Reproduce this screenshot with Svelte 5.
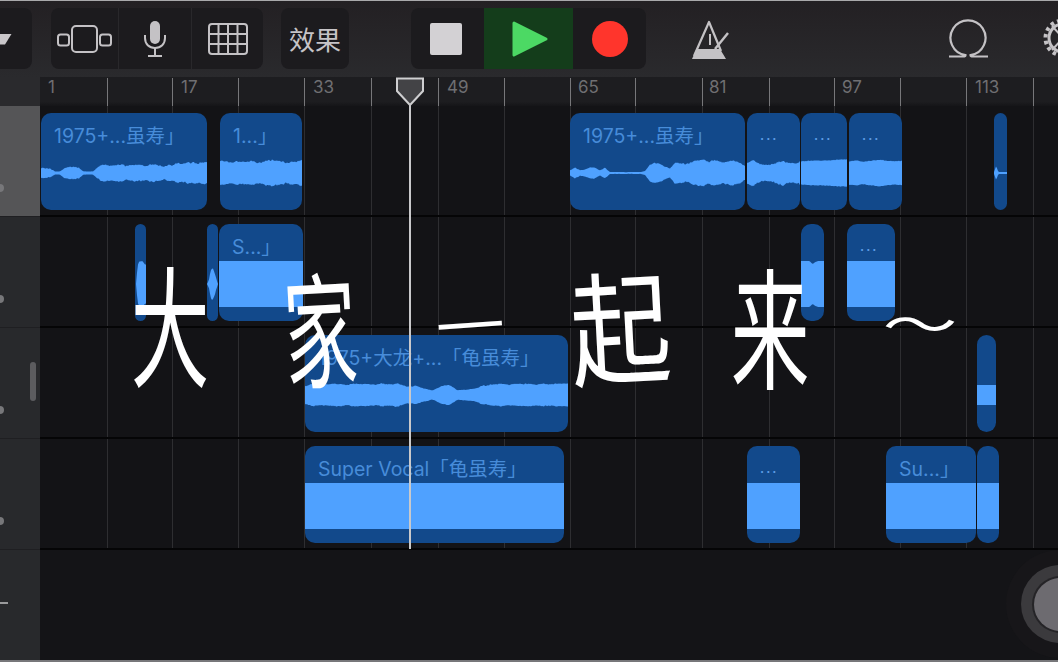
<script>
    // bar lines on the timeline, same x in the ruler and in the tracks
    const bars = [107, 172, 238, 304, 371, 438, 504, 570, 635, 702, 769, 834, 900, 966, 1033];
    const rulerLabels = [
        { n: '1', x: 48 }, { n: '17', x: 181 }, { n: '33', x: 313 }, { n: '49', x: 447 },
        { n: '65', x: 578 }, { n: '81', x: 709 }, { n: '97', x: 842 }, { n: '113', x: 975 }
    ];

    const FLAT = [23];

    const rows = [
        [
            { from: 41, to: 207, label: '1975+...虽寿」', jitter: 0.3,
              env: [6, 6, 5, 1.5, 2, 6, 7, 7, 6, 2, 1.5, 2, 7, 9, 9, 8, 9, 10, 9, 9, 10, 9, 8, 10, 10, 9, 7, 9, 10, 11, 10, 12, 13, 12, 13, 13] },
            { from: 220, to: 302, label: '1...」', env: [13, 13, 12, 13, 13, 12, 13, 14, 13, 12, 13, 14], jitter: 0.22 },
            { from: 570, to: 745, label: '1975+...虽寿」', jitter: 0.22,
              env: [3, 6, 3, 4, 6, 6, 3, 6, 1, 1, 1, 1, 1, 1, 1, 2, 9, 11, 10, 7, 5, 12, 11, 10, 11, 13, 14, 14, 12, 14, 13, 12, 14, 13, 12, 8] },
            { from: 747, to: 800, label: '...', small: true, env: [12, 14, 11, 9, 10, 11, 14, 11, 12, 13], jitter: 0.25 },
            { from: 801, to: 847, label: '...', small: true, env: [12, 13, 13, 13, 14, 14], jitter: 0.08 },
            { from: 849, to: 902, label: '...', small: true, env: [12, 13, 12, 13, 14, 13, 12, 13], jitter: 0.1 },
            { from: 994, to: 1007, env: [1, 7, 1, 1, 1, 1, 1], jitter: 0 }
        ],
        [
            { from: 135, to: 146, env: [0, 0, 18, 22, 23, 23, 23, 22, 20, 20], jitter: 0.04 },
            { from: 207, to: 218, env: [0, 4, 14, 17, 13, 6, 0], jitter: 0.15 },
            { from: 219, to: 303, label: 'S...」', env: FLAT },
            { from: 801, to: 824, env: [23, 23, 23, 23, 20, 22, 23, 23, 23], jitter: 0 },
            { from: 847, to: 895, label: '...', small: true, env: FLAT }
        ],
        [
            { from: 305, to: 568, label: '1975+大龙+...「龟虽寿」', jitter: 0.14,
              env: [10, 12, 11, 12, 12, 11, 12, 12, 11, 12, 12, 12, 9, 10, 7, 5, 9, 11, 5, 6, 7, 10, 11, 12, 11, 12, 12, 11, 12, 12, 12, 12] },
            { from: 977, to: 996, env: [10] }
        ],
        [
            { from: 305, to: 564, label: 'Super Vocal「龟虽寿」', env: FLAT },
            { from: 747, to: 800, label: '...', small: true, env: FLAT },
            { from: 886, to: 976, label: 'Su...」', env: FLAT },
            { from: 977, to: 999, env: FLAT }
        ]
    ];

    // sx/sy stretch the glyph towards the tall handwriting, dy and rot nudge it
    const caption = [
        { c: '大', sx: 0.82, sy: 1.36, dy: 0, rot: 0 },
        { c: '家', sx: 0.76, sy: 1.3, dy: 4, rot: -3 },
        { c: '一', sx: 0.72, sy: 0.6, dy: 2, rot: -4 },
        { c: '起', sx: 1.05, sy: 1.28, dy: 2, rot: -3 },
        { c: '来', sx: 0.82, sy: 1.36, dy: 2, rot: 0 },
        { c: '～', sx: 0.78, sy: 0.5, dy: 0, rot: 0 }
    ];

    function noise(i) {
        const s = Math.sin(i * 12.9898 + 4.1) * 43758.5453;
        return s - Math.floor(s);
    }

    // builds the filled waveform of a region, centred 60px below its top edge
    function wavePath(clip) {
        const w = clip.to - clip.from;
        const env = clip.env;
        const jitter = clip.jitter || 0;
        const top = [], bottom = [];
        for (let x = 0; x <= w; x++) {
            const t = (x / w) * (env.length - 1);
            const i = Math.floor(t);
            const next = env[Math.min(i + 1, env.length - 1)];
            const amp = env[i] + (next - env[i]) * (t - i);
            const slow = noise(Math.floor((x + clip.from) / 5));
            const a = amp * (1 - jitter * (0.5 * slow + 0.5 * noise(x + clip.from)));
            const b = amp * (1 - jitter * (0.5 * slow + 0.5 * noise(x + clip.from + 500)));
            top.push(`${x},${(60 - a).toFixed(1)}`);
            bottom.unshift(`${x},${(60 + b).toFixed(1)}`);
        }
        return 'M' + top.join(' L') + ' L' + bottom.join(' L') + ' Z';
    }
</script>

<div class="screen">
    <header class="toolbar">
        <div class="btn view-menu">
            <svg width="12" height="12" viewBox="0 0 12 12"><path d="M0 1 H11.5 L5 11.5 H0 Z" fill="#c9c7ca"/></svg>
        </div>

        <div class="btn group">
            <div class="cell tracks-cell">
                <svg width="56" height="30" viewBox="0 0 56 30" fill="none" stroke="#c4c2c5" stroke-width="2">
                    <rect x="1" y="10.5" width="11" height="11" rx="2.5"/>
                    <rect x="15" y="2" width="25" height="26" rx="4"/>
                    <rect x="43" y="10.5" width="11" height="11" rx="2.5"/>
                </svg>
            </div>
            <div class="cell mic-cell">
                <svg width="24" height="38" viewBox="0 0 24 38" fill="none" stroke="#c4c2c5" stroke-width="2">
                    <rect x="7" y="1" width="10" height="23" rx="5" fill="#c4c2c5" stroke="none"/>
                    <path d="M2 15 V18 C2 24 6 28 12 28 C18 28 22 24 22 18 V15"/>
                    <path d="M12 28 V35 M5 36 H19"/>
                </svg>
            </div>
            <div class="cell grid-cell">
                <svg width="40" height="32" viewBox="0 0 40 32" fill="none" stroke="#c4c2c5" stroke-width="2">
                    <rect x="1" y="1" width="38" height="30" rx="3"/>
                    <path d="M1 11 H39 M1 21 H39 M10.5 1 V31 M20 1 V31 M29.5 1 V31"/>
                </svg>
            </div>
        </div>

        <div class="btn fx">效果</div>

        <div class="btn transport">
            <div class="cell stop-cell"><span class="stop"></span></div>
            <div class="cell play-cell">
                <svg width="38" height="38" viewBox="0 0 38 38"><path d="M3 3 L35 19 L3 35 Z" fill="#4cd964" stroke="#4cd964" stroke-width="3" stroke-linejoin="round"/></svg>
            </div>
            <div class="cell rec-cell"><span class="rec"></span></div>
        </div>

        <svg class="metronome" width="38" height="42" viewBox="0 0 38 42" fill="none" stroke="#c4c2c5">
            <path d="M1 40 L5.5 30 L29 30 L35 40 Z" fill="#c4c2c5" stroke="none"/>
            <path d="M3 37 L18 3 L30 32" stroke-width="2.2" stroke-linejoin="round"/>
            <path d="M19 15 V26" stroke-width="2"/>
            <path d="M24 30 L37 14" stroke-width="2.4"/>
        </svg>

        <svg class="loop" width="42" height="42" viewBox="0 0 42 42" fill="none" stroke="#c4c2c5" stroke-width="2.2">
            <path d="M1 39.5 H15 Q17.5 39.5 17.5 38.2 A17.5 17.5 0 1 1 22.5 38.2 Q22.5 39.5 25 39.5 H40"/>
        </svg>

        <svg class="gear" width="18" height="42" viewBox="0 0 18 42" fill="none" stroke="#c4c2c5">
            <circle cx="20" cy="21" r="14" stroke-width="3"/>
            <circle cx="20" cy="21" r="17.5" stroke-width="4" stroke-dasharray="3.5 3.4"/>
            <path d="M20 21 L9 9 M20 21 L9 33" stroke-width="2"/>
        </svg>
    </header>

    <div class="ruler">
        <div class="ruler-corner"></div>
        <div class="ruler-bar">
            {#each bars as x}
                <span class="tick" style="left: {x - 40}px"></span>
            {/each}
            {#each rulerLabels as l}
                <span class="bar-no" style="left: {l.x - 40}px">{l.n}</span>
            {/each}
        </div>
    </div>

    <div class="body">
        <aside class="sidebar">
            {#each rows as _, i}
                <div class="head" class:selected={i === 0}><span class="dot"></span></div>
            {/each}
            <div class="head-end"><span class="add"></span></div>
            <span class="scroll-thumb"></span>
        </aside>

        <main class="timeline">
            <div class="tracks">
                {#each bars as x}
                    <span class="grid-line" style="left: {x - 40}px"></span>
                {/each}
                {#each rows as row}
                    <div class="track">
                        {#each row as clip}
                            <div class="clip" style="left: {clip.from - 40}px; width: {clip.to - clip.from}px">
                                <svg class="wave" width={clip.to - clip.from} height="97">
                                    <path d={wavePath(clip)} fill="#4fa1ff"/>
                                </svg>
                                {#if clip.label}
                                    <span class="clip-name" class:small={clip.small}>{clip.label}</span>
                                {/if}
                            </div>
                        {/each}
                    </div>
                {/each}
            </div>
            <div class="pad">
                <div class="knob"><span class="knob-cap"></span></div>
            </div>
        </main>

        <div class="playhead">
            <svg width="30" height="30" viewBox="0 0 30 30">
                <path d="M2 1.5 H28 V14 L15 28 L2 14 Z" fill="#434346" stroke="#cfcfd1" stroke-width="2"/>
            </svg>
            <span class="playhead-line"></span>
        </div>
    </div>

    <div class="caption">
        {#each caption as g}
            <span style="transform: translateY({g.dy}px) rotate({g.rot}deg) scale({g.sx}, {g.sy})">{g.c}</span>
        {/each}
    </div>
</div>

<style>
    :global(body) {
        margin: 0;
        background: #131316;
    }
    .screen {
        position: relative;
        width: 1058px;
        height: 662px;
        overflow: hidden;
        display: flex;
        flex-direction: column;
        font-family: "Inter", "Liberation Sans", "Noto Sans CJK SC", sans-serif;
        border-top: 1px solid #a9a9ab;
        border-bottom: 2px solid #77777a;
        box-sizing: border-box;
        background: #131316;
    }

    /* top bar */
    .toolbar {
        position: relative;
        height: 76px;
        flex: none;
        background: linear-gradient(#232023, #2a2a2d);
        box-sizing: border-box;
        padding-top: 7px;
        display: flex;
        align-items: flex-start;
    }
    .btn {
        height: 61px;
        background: #1c1b1e;
        border-radius: 8px;
        display: flex;
        align-items: center;
        flex: none;
    }
    .view-menu {
        width: 32px;
        border-radius: 0 8px 8px 0;
        align-items: flex-start;
        padding-top: 25px;
        height: 36px;
    }
    .group {
        margin-left: 19px;
        width: 212px;
        overflow: hidden;
    }
    .cell {
        height: 100%;
        display: flex;
        align-items: center;
        justify-content: center;
        box-sizing: border-box;
    }
    .tracks-cell { width: 68px; border-right: 1px solid #29282b; }
    .mic-cell { width: 73px; border-right: 1px solid #29282b; }
    .grid-cell { width: 71px; }
    .fx {
        margin-left: 18px;
        width: 68px;
        justify-content: center;
        color: #c6c4c7;
        font-size: 26px;
        font-family: "Noto Sans CJK SC", sans-serif;
    }
    .transport {
        margin-left: 62px;
        width: 235px;
        overflow: hidden;
    }
    .stop-cell { width: 73px; padding-right: 4px; }
    .stop {
        width: 32px;
        height: 32px;
        border-radius: 2px;
        background: #d3d1d4;
    }
    .play-cell {
        width: 89px;
        height: 62px;
        background: #143d1b;
        padding-left: 2px;
    }
    .rec-cell { width: 73px; }
    .rec {
        width: 36px;
        height: 36px;
        border-radius: 50%;
        background: #ff352c;
    }
    .metronome { margin: 11px 0 0 45px; flex: none; }
    .loop { margin: 9px 0 0 219px; flex: none; }
    .gear { margin: 9px 0 0 53px; flex: none; }

    /* ruler */
    .ruler {
        height: 29px;
        flex: none;
        display: flex;
    }
    .ruler-corner {
        width: 40px;
        background: #2a2a2d;
    }
    .ruler-bar {
        position: relative;
        flex: 1;
        background: linear-gradient(#1d1d20 85%, #151518);
    }
    .tick {
        position: absolute;
        top: 1px;
        bottom: 0;
        width: 1px;
        background: #77777a;
    }
    .bar-no {
        position: absolute;
        top: 1px;
        font-size: 17px;
        line-height: 18px;
        color: #6f6f72;
    }

    /* track area */
    .body {
        position: relative;
        flex: 1;
        display: flex;
        min-height: 0;
    }
    .sidebar {
        position: relative;
        width: 40px;
        flex: none;
        display: flex;
        flex-direction: column;
        background: #28292c;
    }
    .head {
        position: relative;
        height: 111px;
        flex: none;
        box-sizing: border-box;
        border-bottom: 1px solid #1f1f22;
    }
    .head.selected {
        background: #555557;
    }
    .dot {
        position: absolute;
        left: -4px;
        top: 78px;
        width: 8px;
        height: 8px;
        border-radius: 50%;
        background: #77777a;
    }
    .head-end {
        position: relative;
        flex: 1;
    }
    .add {
        position: absolute;
        left: 0;
        top: 52px;
        width: 8px;
        height: 2px;
        background: #9a9a9c;
    }
    .scroll-thumb {
        position: absolute;
        left: 30px;
        top: 256px;
        width: 6px;
        height: 39px;
        border-radius: 3px;
        background: #5c5c5f;
    }
    .timeline {
        flex: 1;
        display: flex;
        flex-direction: column;
        min-width: 0;
    }
    .tracks {
        position: relative;
        flex: none;
    }
    .grid-line {
        position: absolute;
        top: 0;
        bottom: 0;
        width: 1px;
        background: #2e2e31;
    }
    .track {
        position: relative;
        height: 111px;
        box-sizing: border-box;
        border-bottom: 2px solid #050506;
    }
    .clip {
        position: absolute;
        top: 7px;
        height: 97px;
        border-radius: 10px;
        overflow: hidden;
        background: #12498b;
    }
    .wave {
        position: absolute;
        left: 0;
        top: 0;
        display: block;
    }
    .clip-name {
        position: absolute;
        left: 13px;
        top: 12px;
        font-size: 19.5px;
        line-height: 22px;
        white-space: nowrap;
        color: #478cd9;
    }
    .clip-name.small {
        top: 11px;
        font-size: 13px;
        font-weight: 600;
        letter-spacing: 2px;
        color: #5d9de6;
    }
    .pad {
        position: relative;
        flex: 1;
        background: #141417;
    }
    .knob {
        position: absolute;
        left: 981px;
        top: 15px;
        width: 78px;
        height: 78px;
        border-radius: 50%;
        background: #3b3a3d;
        box-shadow: 0 0 0 15px #171619;
        display: flex;
        align-items: center;
        justify-content: center;
    }
    .knob-cap {
        width: 53px;
        height: 53px;
        border-radius: 50%;
        background: #6d6b70;
        box-shadow: 0 0 0 2px #252427;
    }
    .playhead {
        position: absolute;
        left: 395px;
        top: -29px;
        width: 30px;
        height: 472px;
        display: flex;
        flex-direction: column;
        align-items: center;
    }
    .playhead svg {
        flex: none;
        display: block;
    }
    .playhead-line {
        flex: 1;
        width: 2px;
        margin-top: -3px;
        background: #c9c9cb;
    }

    /* handwritten caption that sits over the video frame */
    .caption {
        position: absolute;
        left: 95px;
        top: 255px;
        display: grid;
        grid-template-columns: repeat(6, 150px);
        justify-items: center;
        font-family: "Noto Sans CJK SC", sans-serif;
        font-size: 96px;
        font-weight: 400;
        line-height: 130px;
        color: #fff;
    }
    .caption span {
        display: block;
    }
</style>
